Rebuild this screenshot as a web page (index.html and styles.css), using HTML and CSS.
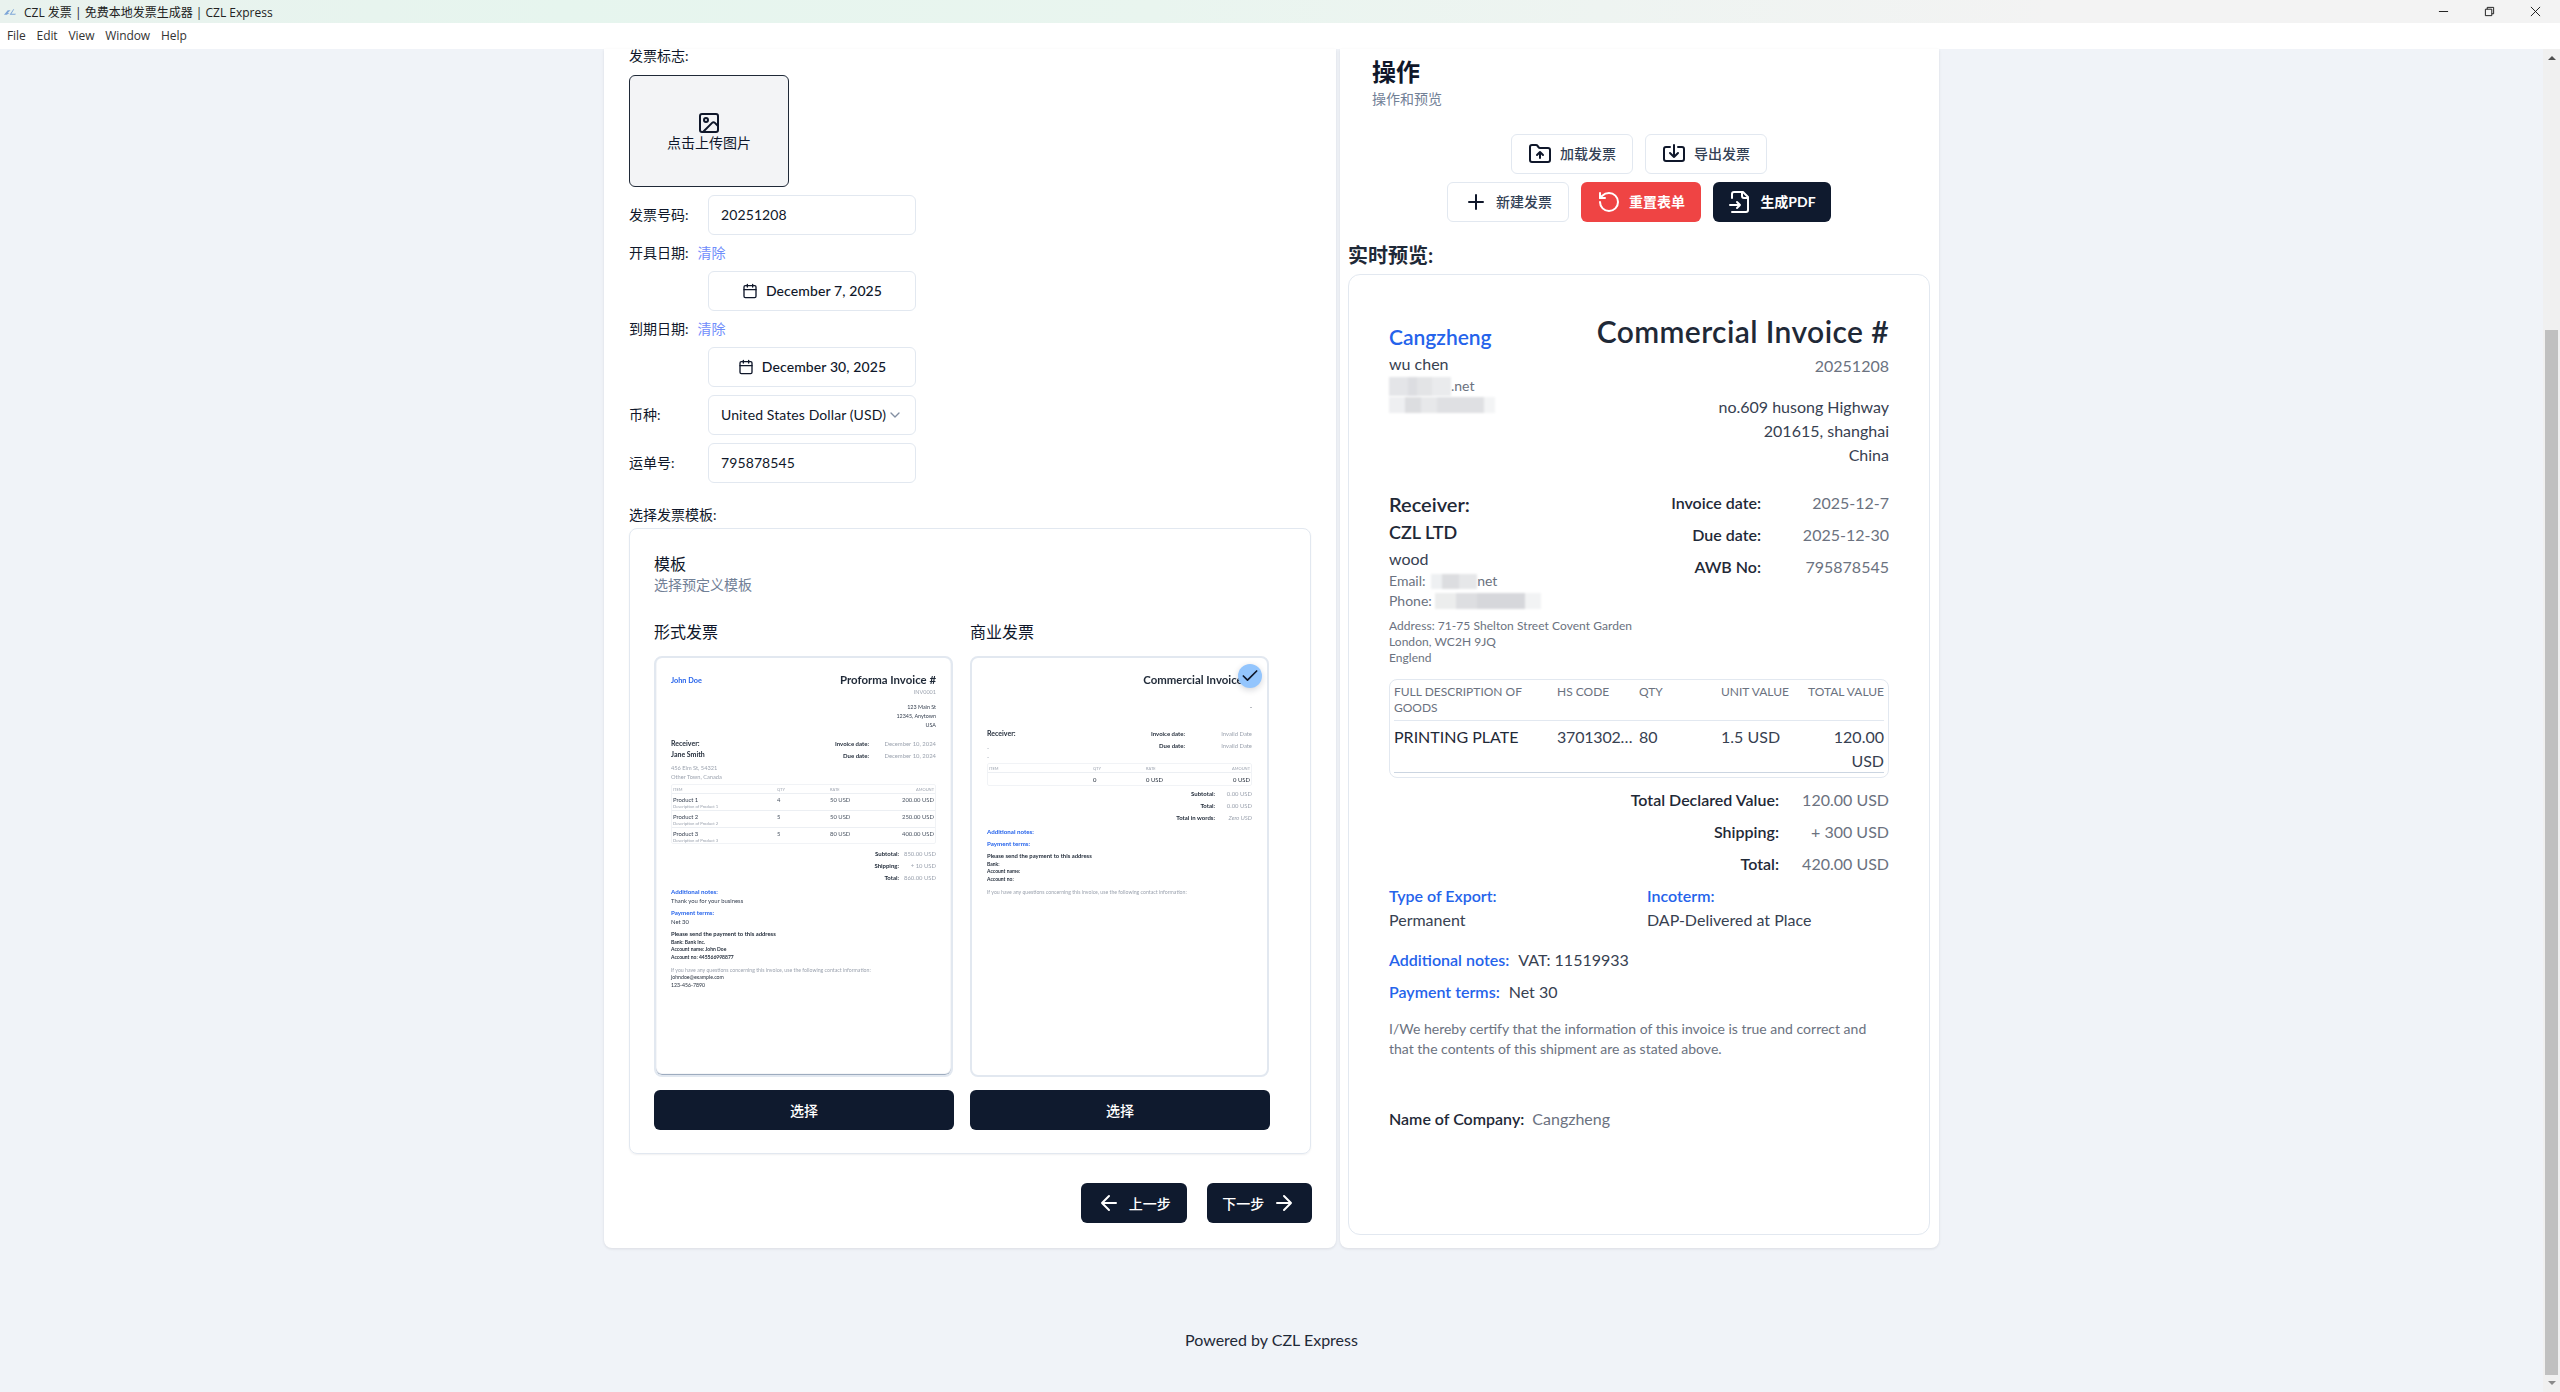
FILE: index.html
```html
<!DOCTYPE html>
<html lang="zh">
<head>
<meta charset="utf-8">
<title>CZL 发票 | 免费本地发票生成器 | CZL Express</title>
<link rel="stylesheet" href="styles.css">
</head>
<body>
<div class="titlebar">
  <svg class="app-logo" viewBox="0 0 14 8"><path d="M0 7 4 2h3L4 5h2L3 7zM6 7l4-6h1L8 6h5l-1 1z" fill="#7ea6d8"/></svg>
  <span class="title-text">CZL 发票 | 免费本地发票生成器 | CZL Express</span>
  <div class="winctl">
    <svg viewBox="0 0 12 12"><path d="M1 6h10" stroke="#111" fill="none"/></svg>
    <svg viewBox="0 0 12 12"><path d="M1.5 3.5h7v7h-7zM3.5 3.5v-2h7v7h-2" stroke="#111" fill="none"/></svg>
    <svg viewBox="0 0 12 12"><path d="M1 1l10 10M11 1 1 11" stroke="#111" fill="none"/></svg>
  </div>
</div>
<nav class="menubar"><span>File</span><span>Edit</span><span>View</span><span>Window</span><span>Help</span></nav>
<div class="viewport">
<main class="page">
  <div class="cards">
    <section class="card-left">
      <div class="label-top">发票标志:</div>
      <div class="logo-box">
        <svg class="ic" viewBox="0 0 24 24"><rect width="18" height="18" x="3" y="3" rx="2"/><circle cx="9" cy="9" r="2"/><path d="m21 15-3.086-3.086a2 2 0 0 0-2.828 0L6 21"/></svg>
        <span>点击上传图片</span>
      </div>
      <div class="form-row"><label>发票号码:</label><div class="field">20251208</div></div>
      <div class="date-label"><label>开具日期:</label><a>清除</a></div>
      <div class="form-row"><span class="spacer"></span><div class="field field-date">
        <svg class="ic ic16" viewBox="0 0 24 24"><path d="M8 2v4M16 2v4"/><rect width="18" height="18" x="3" y="4" rx="2"/><path d="M3 10h18"/></svg><span>December 7, 2025</span></div></div>
      <div class="date-label"><label>到期日期:</label><a>清除</a></div>
      <div class="form-row"><span class="spacer"></span><div class="field field-date">
        <svg class="ic ic16" viewBox="0 0 24 24"><path d="M8 2v4M16 2v4"/><rect width="18" height="18" x="3" y="4" rx="2"/><path d="M3 10h18"/></svg><span>December 30, 2025</span></div></div>
      <div class="form-row"><label>币种:</label><div class="field field-select"><span>United States Dollar (USD)</span>
        <svg class="ic ic16 muted" viewBox="0 0 24 24"><path d="m6 9 6 6 6-6"/></svg></div></div>
      <div class="form-row"><label>运单号:</label><div class="field">795878545</div></div>
      <div class="label-tpl">选择发票模板:</div>

      <div class="tpl-card">
        <h3>模板</h3>
        <p class="sub">选择预定义模板</p>
        <div class="tpl-grid">
          <div class="tpl">
            <div class="tpl-name">形式发票</div>
            <div class="sheet sheet-shadow">
              <div class="doc">
                <div class="d-head">
                  <div class="d-brand">John Doe</div>
                  <div class="d-right">
                    <div class="d-title">Proforma Invoice #</div>
                    <div class="d-no">INV0001</div>
                    <div class="d-addr">123 Main St<br>12345, Anytown<br>USA</div>
                  </div>
                </div>
                <div class="d-meta">
                  <div>
                    <div class="d-b d-l1">Receiver:</div>
                    <div class="d-b d-l2">Jane Smith</div>
                    <div class="d-addr d-grey">456 Elm St, 54321<br>Other Town, Canada</div>
                  </div>
                  <div class="d-dates">
                    <div class="d-kv"><b>Invoice date:</b><span>December 10, 2024</span></div>
                    <div class="d-kv"><b>Due date:</b><span>December 10, 2024</span></div>
                  </div>
                </div>
                <div class="d-table">
                  <div class="d-tr d-th"><span>ITEM</span><span>QTY</span><span>RATE</span><span>AMOUNT</span></div>
                  <div class="d-tr"><span>Product 1<small>Description of Product 1</small></span><span>4</span><span>50 USD</span><span>200.00 USD</span></div>
                  <div class="d-tr"><span>Product 2<small>Description of Product 2</small></span><span>5</span><span>50 USD</span><span>250.00 USD</span></div>
                  <div class="d-tr"><span>Product 3<small>Description of Product 3</small></span><span>5</span><span>80 USD</span><span>400.00 USD</span></div>
                </div>
                <div class="d-totals">
                  <div class="d-sum"><b>Subtotal:</b><span>850.00 USD</span></div>
                  <div class="d-sum"><b>Shipping:</b><span>+ 10 USD</span></div>
                  <div class="d-sum"><b>Total:</b><span>860.00 USD</span></div>
                </div>
                <div class="d-blue">Additional notes:</div>
                <div class="d-txt">Thank you for your business</div>
                <div class="d-blue">Payment terms:</div>
                <div class="d-txt">Net 30</div>
                <div class="d-pay">Please send the payment to this address</div>
                <div class="d-bank">Bank: Bank Inc.<br>Account name: John Doe<br>Account no: 445566998877</div>
                <div class="d-q">If you have any questions concerning this invoice, use the following contact information:</div>
                <div class="d-contact">johndoe@example.com<br>123-456-7890</div>
              </div>
            </div>
            <button class="btn-dark btn-wide" type="button">选择</button>
          </div>
          <div class="tpl">
            <div class="tpl-name">商业发票</div>
            <div class="sheet">
              <div class="doc">
                <div class="d-head d-head2">
                  <div class="d-brand"></div>
                  <div class="d-right">
                    <div class="d-title">Commercial Invoice #</div>
                    <div class="d-addr d-dash">-</div>
                  </div>
                </div>
                <div class="d-meta d-meta2">
                  <div>
                    <div class="d-b d-l1">Receiver:</div>
                    <div class="d-addr d-grey d-dashes">-<br>-</div>
                  </div>
                  <div class="d-dates">
                    <div class="d-kv"><b>Invoice date:</b><span>Invalid Date</span></div>
                    <div class="d-kv"><b>Due date:</b><span>Invalid Date</span></div>
                  </div>
                </div>
                <div class="d-table d-table2">
                  <div class="d-tr d-th"><span>ITEM</span><span>QTY</span><span>RATE</span><span>AMOUNT</span></div>
                  <div class="d-tr d-tr2"><span></span><span>0</span><span>0 USD</span><span>0 USD</span></div>
                </div>
                <div class="d-totals d-totals2">
                  <div class="d-sum"><b>Subtotal:</b><span>0.00 USD</span></div>
                  <div class="d-sum"><b>Total:</b><span>0.00 USD</span></div>
                  <div class="d-sum"><b>Total in words:</b><span><i>Zero USD</i></span></div>
                </div>
                <div class="d-blue">Additional notes:</div>
                <div class="d-blue">Payment terms:</div>
                <div class="d-pay">Please send the payment to this address</div>
                <div class="d-bank">Bank:<br>Account name:<br>Account no:</div>
                <div class="d-q">If you have any questions concerning this invoice, use the following contact information:</div>
              </div>
              <div class="check-badge"><svg viewBox="0 0 24 24"><path d="M20 6 9 17l-5-5"/></svg></div>
            </div>
            <button class="btn-dark btn-wide" type="button">选择</button>
          </div>
        </div>
      </div>

      <div class="step-nav">
        <button class="btn-dark btn-step" type="button"><svg class="ic" viewBox="0 0 24 24"><path d="m12 19-7-7 7-7M19 12H5"/></svg>上一步</button>
        <button class="btn-dark btn-step" type="button">下一步<svg class="ic" viewBox="0 0 24 24"><path d="M5 12h14M12 5l7 7-7 7"/></svg></button>
      </div>
    </section>

    <section class="card-right">
      <div class="act-head">
        <h2>操作</h2>
        <p class="sub">操作和预览</p>
      </div>
      <div class="act-row act-row1">
        <button class="btn-out" type="button"><svg class="ic" viewBox="0 0 24 24"><path d="M20 20a2 2 0 0 0 2-2V8a2 2 0 0 0-2-2h-7.9a2 2 0 0 1-1.69-.9L9.6 3.9A2 2 0 0 0 7.93 3H4a2 2 0 0 0-2 2v13a2 2 0 0 0 2 2Z"/><path d="M12 10v6M9 13l3-3 3 3"/></svg>加载发票</button>
        <button class="btn-out" type="button"><svg class="ic" viewBox="0 0 24 24"><path d="M12 3v12M8 11l4 4 4-4"/><path d="M8 5H4a2 2 0 0 0-2 2v10a2 2 0 0 0 2 2h16a2 2 0 0 0 2-2V7a2 2 0 0 0-2-2h-4"/></svg>导出发票</button>
      </div>
      <div class="act-row">
        <button class="btn-out" type="button"><svg class="ic" viewBox="0 0 24 24"><path d="M5 12h14M12 5v14"/></svg>新建发票</button>
        <button class="btn-red" type="button"><svg class="ic" viewBox="0 0 24 24"><path d="M3 12a9 9 0 1 0 9-9 9.75 9.75 0 0 0-6.74 2.74L3 8"/><path d="M3 3v5h5"/></svg>重置表单</button>
        <button class="btn-dark btn-pdf" type="button"><svg class="ic" viewBox="0 0 24 24"><path d="M4 22h14a2 2 0 0 0 2-2V7l-5-5H6a2 2 0 0 0-2 2v4"/><path d="M14 2v4a2 2 0 0 0 2 2h4M2 15h10M9 18l3-3-3-3"/></svg>生成PDF</button>
      </div>
      <h3 class="live-title">实时预览:</h3>
      <div class="inv">
        <div class="inv-head">
          <div class="inv-from">
            <div class="inv-brand">Cangzheng</div>
            <div class="inv-16 inv-contact">wu chen</div>
            <div class="inv-red1"><i class="blot blot-a"></i><span>.net</span></div>
            <div class="inv-red2"><i class="blot blot-b"></i></div>
          </div>
          <div class="inv-to">
            <div class="inv-title">Commercial Invoice #</div>
            <div class="inv-no">20251208</div>
            <div class="inv-addr">no.609 husong Highway<br>201615, shanghai<br>China</div>
          </div>
        </div>
        <div class="inv-meta">
          <div class="inv-rcv">
            <div class="rcv-h">Receiver:</div>
            <div class="rcv-n">CZL LTD</div>
            <div class="inv-16 rcv-c">wood</div>
            <div class="rcv-line">Email: <i class="blot blot-c"></i>net</div>
            <div class="rcv-line">Phone: <i class="blot blot-d"></i></div>
            <div class="rcv-addr">Address: 71-75 Shelton Street Covent Garden<br>London, WC2H 9JQ<br>Englend</div>
          </div>
          <div class="inv-dates">
            <div class="kv"><b>Invoice date:</b><span>2025-12-7</span></div>
            <div class="kv"><b>Due date:</b><span>2025-12-30</span></div>
            <div class="kv"><b>AWB No:</b><span>795878545</span></div>
          </div>
        </div>
        <div class="goods">
          <div class="goods-row goods-head"><span>FULL DESCRIPTION OF GOODS</span><span>HS CODE</span><span>QTY</span><span>UNIT VALUE</span><span class="ta-r">TOTAL VALUE</span></div>
          <div class="goods-row goods-body"><span>PRINTING PLATE</span><span class="ellip">370130249080</span><span>80</span><span>1.5 USD</span><span class="ta-r wrap-val">120.00 USD</span></div>
        </div>
        <div class="sum"><b>Total Declared Value:</b><span>120.00 USD</span></div>
        <div class="sum"><b>Shipping:</b><span>+ 300 USD</span></div>
        <div class="sum"><b>Total:</b><span>420.00 USD</span></div>
        <div class="terms">
          <div class="term-a"><div class="blue">Type of Export:</div><div class="dark">Permanent</div></div>
          <div><div class="blue">Incoterm:</div><div class="dark">DAP-Delivered at Place</div></div>
        </div>
        <div class="note note1"><span class="blue">Additional notes:</span><span class="dark">VAT: 11519933</span></div>
        <div class="note"><span class="blue">Payment terms:</span><span class="dark">Net 30</span></div>
        <p class="certify">I/We hereby certify that the information of this invoice is true and correct and that the contents of this shipment are as stated above.</p>
        <div class="company"><b>Name of Company:</b><span>Cangzheng</span></div>
      </div>
    </section>
  </div>
  <footer class="foot">Powered by <a>CZL Express</a></footer>
</main>
<aside class="scrollbar">
  <svg class="sb-up" viewBox="0 0 8 4"><path d="M4 0 8 4H0z" fill="#505050"/></svg>
  <div class="sb-thumb"></div>
  <svg class="sb-down" viewBox="0 0 8 4"><path d="M0 0h8L4 4z" fill="#8a8a8a"/></svg>
</aside>
</div>
</body>
</html>
```

FILE: styles.css
```css
* { box-sizing: border-box; }
html, body { margin: 0; height: 100%; overflow: hidden; }
body {
  width: 2560px; height: 1392px; display: flex; flex-direction: column;
  font-family: Lato, "Noto Sans CJK SC", sans-serif;
  font-size: 14px; color: #0f172a; background: #f0f3f8;
}
svg { display: block; flex: none; }
button { font: inherit; border: 0; padding: 0; }
h2, h3, p { margin: 0; font-weight: normal; }

/* window chrome */
.titlebar {
  height: 23px; flex: none; display: flex; align-items: center; padding-left: 4px;
  background: linear-gradient(90deg, #e9f2ee 0, #e6f5ee 22%, #e9f5ef 45%, #f3f3f3 80%);
  font: 12px "Open Sans", "Noto Sans CJK SC", sans-serif; color: #222;
}
.app-logo { width: 13px; height: 8px; margin-right: 7px; }
.winctl { margin-left: auto; display: flex; }
.winctl svg { width: 11px; height: 11px; margin-right: 35px; }
.winctl svg:last-child { margin-right: 19px; }
.menubar {
  height: 26px; flex: none; background: #fff; display: flex; align-items: center; padding: 0 0 2px 7px; gap: 11px;
  font: 12px "Open Sans", sans-serif; letter-spacing: -.1px; color: #333;
}
.viewport { flex: 1; display: flex; min-height: 0; }
.page { flex: 1; min-width: 0; display: flex; flex-direction: column; align-items: center; }
.scrollbar { width: 17px; flex: none; background: #f0f0f0; display: flex; flex-direction: column; align-items: center; }
.sb-up { width: 8px; height: 4px; margin-top: 7px; }
.sb-thumb { width: 13px; background: #c0c0c0; margin-top: 270px; flex: 1; }
.sb-down { width: 8px; height: 4px; margin: 6px 0 7px; }

.cards { display: flex; gap: 4px; height: 1199px; width: 1335px; }
.card-left, .card-right {
  background: #fff; border-radius: 0 0 8px 8px; box-shadow: 0 1px 3px rgba(15,23,42,.1); height: 1199px;
}
.card-left { width: 732px; padding: 0 25px; }
.card-right { width: 599px; padding: 0 9px 0 8px; }

/* form */
.label-top { line-height: 14px; margin-bottom: 12px; }
.logo-box {
  width: 160px; height: 112px; border: 1px solid #1f2937; border-radius: 6px; background: #f3f4f6;
  display: flex; flex-direction: column; align-items: center; justify-content: center;
  margin-bottom: 8px; line-height: 16px;
}
.ic { width: 24px; height: 24px; fill: none; stroke: currentColor; stroke-width: 2; stroke-linecap: round; stroke-linejoin: round; }
.ic16 { width: 16px; height: 16px; }
.muted { color: #64748b; opacity: .8; }
.form-row { display: flex; align-items: center; height: 40px; margin-bottom: 8px; }
.form-row label, .spacer { width: 79px; flex: none; padding-bottom: 2px; }
.field {
  width: 208px; height: 40px; border: 1px solid #e2e8f0; border-radius: 6px; background: #fff;
  display: flex; align-items: center; padding: 0 12px 2px; letter-spacing: .1px;
}
.field-date { justify-content: center; gap: 8px; font-weight: 500; }
.field-date svg { margin-bottom: -2px; }
.field-select { justify-content: space-between; padding-right: 12px; }
.field-select svg { margin-bottom: -2px; }
.date-label { height: 20px; line-height: 20px; margin-bottom: 8px; display: flex; gap: 9px; }
.date-label a { color: #6f8dfb; }
.label-tpl { line-height: 20px; margin-top: 22px; margin-bottom: 3px; }

/* templates */
.tpl-card {
  width: 682px; height: 626px; border: 1px solid #e2e8f0; border-radius: 8px; padding: 24px;
  box-shadow: 0 1px 2px rgba(15,23,42,.06);
}
.tpl-card h3 { font-size: 16px; line-height: 22px; font-weight: 400; }
.sub { color: #718096; line-height: 20px; }
.tpl-grid { display: flex; gap: 16px; margin-top: 25px; }
.tpl { width: 300px; }
.tpl-name { font-size: 16px; line-height: 24px; margin-bottom: 12px; }
.sheet {
  position: relative; height: 421px; width: 299px; border: 2px solid #e2e8f0; border-radius: 8px; background: #fff; overflow: visible;
}
.sheet-shadow { box-shadow: inset 0 -1px 1px #94a3b8; }
.btn-dark { background: #0f1a2e; color: #fff; border-radius: 6px; display: flex; align-items: center; justify-content: center; }
.btn-wide { width: 300px; height: 40px; margin-top: 13px; padding-bottom: 1px; font-weight: 500; }
.check-badge {
  position: absolute; top: 6px; right: 5px; width: 24px; height: 24px; border-radius: 50%; background: #93c5fd;
  display: flex; align-items: center; justify-content: center; box-shadow: 0 2px 6px rgba(15,23,42,.18);
}
.check-badge svg { width: 20px; height: 20px; fill: none; stroke: #0f172a; stroke-width: 2; stroke-linecap: round; stroke-linejoin: round; }

/* miniature invoice */
.doc { padding: 15px 15px 0; overflow: hidden; height: 100%; font-size: 5.9px; line-height: 9px; color: #374151; filter: blur(.3px); }
.d-head { display: flex; justify-content: space-between; height: 64.5px; }
.d-head2 { height: 54.5px; }
.d-brand { color: #2563eb; font-size: 7.3px; font-weight: 700; line-height: 12px; padding-top: 2px; }
.d-right { text-align: right; }
.d-title { font-size: 11.4px; line-height: 14px; font-weight: 700; color: #1f2937; white-space: nowrap; }
.d-no { color: #9ca3af; font-size: 5.5px; line-height: 9px; margin-top: 1px; margin-bottom: 6px; }
.d-addr { font-size: 5.4px; line-height: 9px; }
.d-dash { margin-top: 15.5px; }
.d-meta { display: flex; justify-content: space-between; height: 46.5px; }
.d-meta2 { height: 35.5px; }
.d-b { font-weight: 700; color: #1f2937; }
.d-l1 { font-size: 7px; line-height: 11px; }
.d-l2 { font-size: 7px; line-height: 11px; }
.d-grey { color: #9ca3af; margin-top: 3px; font-size: 5.7px; }
.d-dashes { margin-top: 4px; }
.d-kv { display: flex; height: 12px; line-height: 12px; }
.d-kv b { width: 60px; text-align: right; color: #1f2937; font-size: 6px; white-space: nowrap; }
.d-kv span { width: 67px; text-align: right; color: #9ca3af; white-space: nowrap; }
.d-dates { width: 127px; }
.d-table { border: 1px solid #f1f3f6; border-radius: 2px; height: 60px; }
.d-table2 { height: 23px; }
.d-tr { display: flex; height: 17px; padding: 2px 1px 0; border-bottom: 1px solid #eceff3; line-height: 8px; color: #4b5563; }
.d-tr:last-child { border-bottom: 0; height: 15px; }
.d-tr span:nth-child(1) { width: 104px; color: #374151; }
.d-tr span:nth-child(2) { width: 53px; }
.d-tr span:nth-child(3) { width: 45px; }
.d-tr span:nth-child(4) { flex: 1; text-align: right; }
.d-tr small { display: block; font-size: 4.2px; line-height: 6px; color: #9ca3af; }
.d-th { height: 9px; padding-top: 0; font-size: 4px; line-height: 9px; color: #9ca3af; }
.d-th span:nth-child(1) { color: #9ca3af; }
.d-tr2 { padding-top: 2px; line-height: 10px; color: #1f2937; }
.d-tr.d-tr2 { height: 13px; }
.d-totals { margin-top: 4px; margin-bottom: 2px; }
.d-totals2 { margin-top: 2px; }
.d-sum { display: flex; justify-content: flex-end; height: 12px; line-height: 12px; }
.d-sum b { color: #1f2937; font-size: 6px; white-space: nowrap; }
.d-sum span { width: 37px; text-align: right; color: #9ca3af; white-space: nowrap; }
.d-blue { color: #2563eb; font-weight: 700; font-size: 6.2px; line-height: 9px; margin-top: 3px; }
.d-txt { line-height: 9px; font-size: 5.9px; }
.d-pay { font-weight: 700; color: #1f2937; font-size: 5.9px; line-height: 9px; margin-top: 3px; }
.d-bank { color: #1f2937; font-size: 5px; font-weight: 700; line-height: 7.5px; margin-top: .5px; }
.d-q { color: #9ca3af; font-size: 5.2px; line-height: 8px; margin-top: 5px; white-space: nowrap; }
.d-contact { color: #1f2937; font-size: 5.2px; line-height: 7.5px; }

/* step nav */
.step-nav { display: flex; justify-content: flex-end; gap: 20px; width: 683px; margin-top: 29px; }
.btn-step { width: 105.5px; height: 40px; gap: 8px; font-weight: 500; }

/* actions */
.act-head { padding: 0 24px; height: 85px; padding-top: 10px; }
.act-head h2 { font-size: 24px; line-height: 26px; font-weight: 700; margin-bottom: 4px; }
.act-row { display: flex; justify-content: center; gap: 12px; margin-bottom: 8px; }
.btn-out, .btn-red, .btn-pdf { height: 40px; padding-bottom: 2px; }
.btn-out svg, .btn-red svg, .btn-pdf svg { margin-bottom: -2px; }
.btn-out {
  width: 122px; background: #fff; border: 1px solid #e2e8f0; border-radius: 6px; color: #334155;
  display: flex; align-items: center; justify-content: center; gap: 8px; font-weight: 500;
}
.btn-out .ic { color: #0f172a; }
.btn-red {
  width: 120px; background: #ef4444; color: #fff; border-radius: 6px;
  display: flex; align-items: center; justify-content: center; gap: 8px; font-weight: 700;
}
.btn-pdf { width: 118px; gap: 8px; font-weight: 700; }
.live-title { font-size: 20px; line-height: 28px; font-weight: 700; margin-top: 19px; margin-bottom: 5px; color: #1f2937; }

/* invoice preview */
.inv {
  height: 961px; border: 1px solid #e2e8f0; border-radius: 12px; padding: 38px 40px 0; color: #374151; font-size: 16px; line-height: 24px;
}
.inv-head { display: flex; justify-content: space-between; height: 176px; }
.inv-brand { font-size: 21px; line-height: 28px; font-weight: 600; color: #2563eb; margin-top: 10px; }
.inv-contact { margin-top: 1px; line-height: 24px; }
.inv-16 { font-size: 16px; }
.inv-red1 { height: 20px; display: flex; font-size: 14px; line-height: 22px; color: #6b7280; margin-top: -1px; }
.inv-red2 { height: 24px; }
.blot { display: inline-block; filter: blur(1px); }
.blot-a { width: 62px; height: 19px; margin-top: 2px; background: linear-gradient(90deg, #e4e5e8 0 30%, #dcdde1 30% 45%, #e3e4e6 45% 70%, #eaebed 70% 100%); }
.blot-b { width: 106px; height: 16px; margin-top: 2px; background: linear-gradient(90deg, #eeeff1 0 15%, #dcdde0 15% 30%, #e7e8ea 30% 45%, #dfe0e3 45% 90%, #f3f4f5 90%); }
.blot-c { width: 46px; height: 15px; vertical-align: -3px; margin-left: 2px; background: linear-gradient(90deg, #eef0f2 0 25%, #dcdde0 25% 60%, #e6e7e9 60%); }
.blot-d { width: 106px; height: 16px; vertical-align: -3px; background: linear-gradient(90deg, #eceded 0 20%, #dddee1 20% 40%, #d6d7db 40% 85%, #f2f3f4 85%); }
.inv-to { text-align: right; }
.inv-title { font-size: 30px; line-height: 36px; font-weight: 600; color: #1f2937; letter-spacing: .4px; }
.inv-no { color: #6b7280; line-height: 24px; margin-top: 5px; margin-bottom: 17px; }
.inv-addr { line-height: 24px; color: #374151; }
.inv-meta { display: flex; justify-content: space-between; height: 190px; }
.rcv-h { font-size: 20px; line-height: 28px; font-weight: 600; color: #1f2937; margin-top: 1px; }
.rcv-n { font-size: 18px; line-height: 28px; font-weight: 600; color: #1f2937; }
.rcv-c { line-height: 24px; margin-top: 1px; }
.rcv-line { font-size: 14px; line-height: 20px; color: #6b7280; }
.rcv-addr { font-size: 12px; line-height: 16px; color: #6b7280; margin-top: 7px; letter-spacing: .05px; }
.inv-dates { width: 240px; }
.kv { display: flex; height: 32px; line-height: 32px; }
.kv:first-child { margin-top: -2px; }
.kv b { width: 112px; text-align: right; color: #1f2937; font-weight: 600; }
.kv span { flex: 1; text-align: right; color: #6b7280; }
.goods { border: 1px solid #e2e8f0; border-radius: 8px; padding: 4px; height: 99px; margin-bottom: 6px; }
.goods-row { display: grid; grid-template-columns: 163px 82px 82px 82px 81px; }
.goods-head { font-size: 12px; line-height: 16px; color: #6b7280; padding: 0 0 5px; border-bottom: 1px solid #e2e8f0; height: 37px; }
.goods-body { font-size: 16px; line-height: 24px; padding-top: 4px; border-bottom: 1px solid #cbd5e1; height: 52px; color: #374151; }
.goods-head span:first-child { padding-right: 24px; }
.goods-head span { white-space: normal; }
.goods-head span:nth-child(4), .goods-head span:nth-child(5) { white-space: nowrap; }
.goods-body span:first-child { color: #1f2937; }
.ta-r { text-align: right; }
.wrap-val { padding-left: 24px; }
.ellip { overflow: hidden; text-overflow: ellipsis; white-space: nowrap; margin-right: -1px; letter-spacing: -.2px; }
.sum { display: flex; justify-content: flex-end; height: 32px; line-height: 32px; }
.sum b { font-weight: 600; color: #1f2937; }
.sum span { width: 110px; text-align: right; color: #6b7280; }
.terms { display: flex; margin-top: 4px; }
.term-a { width: 258px; }
.blue { color: #2563eb; font-weight: 600; }
.dark { color: #374151; }
.note { display: flex; gap: 9px; height: 32px; line-height: 32px; }
.note1 { margin-top: 12px; }
.certify { font-size: 14px; line-height: 20px; color: #6b7280; margin-top: 11px; }
.company { display: flex; gap: 8px; margin-top: 48px; line-height: 24px; }
.company b { font-weight: 600; color: #1f2937; }
.company span { color: #6b7280; }

.foot { margin-top: 80px; font-size: 16px; line-height: 24px; color: #1f2937; }
```
